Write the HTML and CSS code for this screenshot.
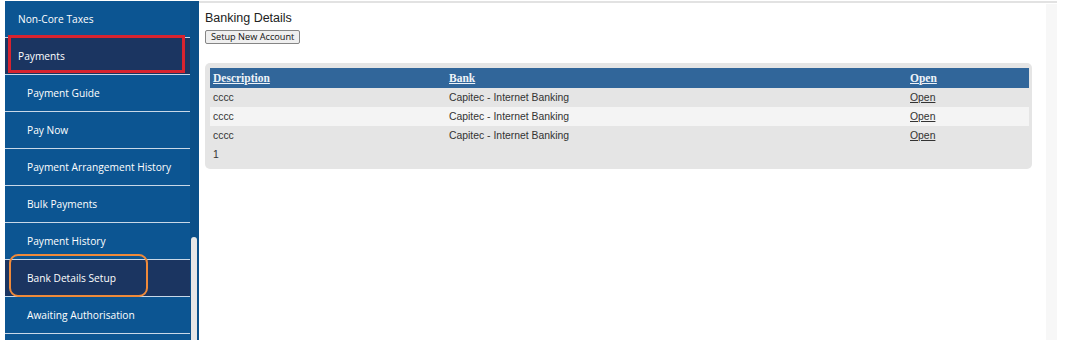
FILE: index.html
```html
<!doctype html>
<html>
  <head>
    <meta charset="utf-8">
    <link rel="stylesheet" href="styles.css">
    <title>Banking Details</title>
  </head>
  <body>
    <div id="frame">
      <nav id="sidebar">
        <ul class="menu">
          <li class="item">Non-Core Taxes</li>
          <li class="item active">Payments</li>
          <li class="item sub">Payment Guide</li>
          <li class="item sub">Pay Now</li>
          <li class="item sub">Payment Arrangement History</li>
          <li class="item sub">Bulk Payments</li>
          <li class="item sub">Payment History</li>
          <li class="item sub active">Bank Details Setup</li>
          <li class="item sub">Awaiting Authorisation</li>
        </ul>
        <div class="scroll-track"><div class="scroll-thumb"></div></div>
        <!-- annotation marks drawn over the menu -->
        <div class="mark mark-red"></div>
        <div class="mark mark-orange"></div>
      </nav>
      <div id="main-wrap">
        <div id="content">
          <h1>Banking Details</h1>
          <button class="btn">Setup New Account</button>
          <div class="grid-box">
            <table class="grid">
              <thead>
                <tr>
                  <th class="col-desc"><a href="#">Description</a></th>
                  <th class="col-bank"><a href="#">Bank</a></th>
                  <th class="col-open"><a href="#">Open</a></th>
                </tr>
              </thead>
              <tbody>
                <tr>
                  <td>cccc</td>
                  <td>Capitec - Internet Banking</td>
                  <td><a href="#">Open</a></td>
                </tr>
                <tr class="alt">
                  <td>cccc</td>
                  <td>Capitec - Internet Banking</td>
                  <td><a href="#">Open</a></td>
                </tr>
                <tr>
                  <td>cccc</td>
                  <td>Capitec - Internet Banking</td>
                  <td><a href="#">Open</a></td>
                </tr>
                <tr class="pager">
                  <td colspan="3">1</td>
                </tr>
              </tbody>
            </table>
          </div>
        </div>
        <div class="page-scroll"></div>
      </div>
    </div>
  </body>
</html>
```

FILE: styles.css
```css
body {
  margin: 0;
  background: #fff;
  font-family: "Liberation Sans", Arial, sans-serif;
}

#frame {
  display: flex;
  width: 1057px;
  height: 340px;
}

/* left menu */

#sidebar {
  position: relative;
  display: flex;
  margin: 1px 0 0 5px;
  background: #0c5592;
}

.menu {
  list-style: none;
  margin: 0;
  padding: 0;
  width: 185px;
}

.item {
  height: 36px;
  line-height: 36px;
  padding-left: 13px;
  border-bottom: 1px solid #c9d8e8;
  color: #fff;
  font-family: "Open Sans", sans-serif;
  font-size: 10.2px;
  font-weight: 500;
  white-space: nowrap;
}

.item.sub {
  padding-left: 22px;
}

.item.active {
  background: #1b3561;
}

.scroll-track {
  width: 9px;
  padding: 236px 0 0 1px;
  background: #0b4f88;
  box-sizing: border-box;
}

.scroll-thumb {
  width: 6px;
  height: 110px;
  border-radius: 3px 3px 0 0;
  background: #e6e6e6;
}

.mark {
  position: absolute;
  box-sizing: border-box;
}

.mark-red {
  left: 3px;
  top: 34px;
  width: 177px;
  height: 38px;
  border: 3px solid #d8232f;
}

.mark-orange {
  left: 4px;
  top: 253px;
  width: 139px;
  height: 43px;
  border: 2.5px solid #f08a3a;
  border-radius: 9px;
}

/* main area */

#main-wrap {
  flex: 1;
  display: flex;
  margin-top: 1px;
  border-top: 2px solid #e2e2e2;
}

#content {
  flex: 1;
  padding: 8px 14px 0 6px;
}

h1 {
  margin: 0;
  font-size: 12.5px;
  line-height: 15px;
  font-weight: normal;
  color: #222;
}

.btn {
  display: block;
  margin-top: 4px;
  height: 14px;
  padding: 0 5px;
  font-family: "Open Sans", sans-serif;
  font-size: 9.2px;
  line-height: 12px;
  color: #111;
  background: #efefef;
  border: 1px solid #858585;
  border-radius: 2px;
}

.page-scroll {
  width: 11px;
  margin-top: 1px;
  background: #f7f7f7;
}

.grid-box {
  margin-top: 19px;
  padding: 5px 3px 5px 5px;
  background: #e5e5e5;
  border-radius: 5px;
}

.grid {
  width: 100%;
  border-collapse: collapse;
  font-size: 10.4px;
  color: #333;
}

.grid th,
.grid td {
  height: 19px;
  padding: 0 3px;
  text-align: left;
  vertical-align: middle;
  color: #333;
}

.grid th {
  height: 20px;
  background: #31669a;
  font-family: "Liberation Serif", "Times New Roman", serif;
  font-size: 11.5px;
  font-weight: bold;
}

.grid th a {
  color: #eef3f8;
}

.grid td a {
  color: #333;
}

.col-desc {
  width: 230px;
}

.col-bank {
  width: 455px;
}

.grid tr.alt td {
  background: #f4f4f4;
}
```
